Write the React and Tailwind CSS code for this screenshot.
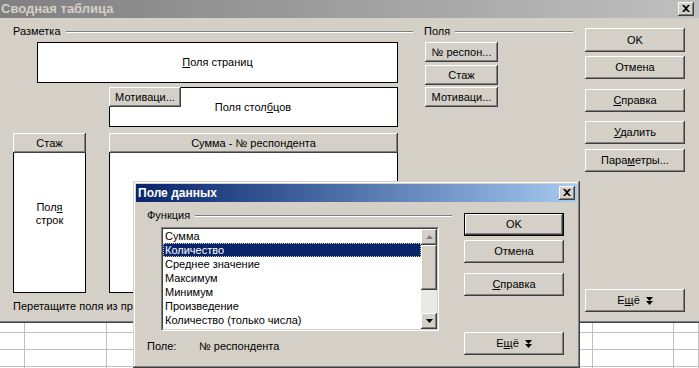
const raised =
  "bg-[#d4d0c8] shadow-[inset_-1px_-1px_0_#404040,inset_1px_1px_0_#ffffff,inset_-2px_-2px_0_#808080,inset_2px_2px_0_#d4d0c8]";

function Btn({ children, className = "", def = false }) {
  if (def) {
    return (
      <div className={`border border-black ${className}`}>
        <div className={`flex h-full w-full items-center justify-center ${raised}`}>{children}</div>
      </div>
    );
  }
  return <div className={`flex items-center justify-center ${raised} ${className}`}>{children}</div>;
}

function CloseBtn() {
  return (
    <div className={`flex h-[14px] w-[16px] items-center justify-center ${raised}`}>
      <svg width="8" height="7" viewBox="0 0 8 7" className="mb-[1px]">
        <path d="M0 0h2l2 2 2-2h2L5 3.5 8 7H6L4 5 2 7H0l3-3.5z" fill="#000" />
      </svg>
    </div>
  );
}

function MoreIcon() {
  return (
    <svg width="7" height="8" viewBox="0 0 7 8" className="ml-[6px]">
      <path d="M0 0h7L3.5 4z M0 4h7L3.5 8z" fill="#000" />
    </svg>
  );
}

function Etched({ className = "" }) {
  return <div className={`h-[2px] border-t border-b border-t-[#808080] border-b-white ${className}`} />;
}

const items = [
  "Сумма",
  "Количество",
  "Среднее значение",
  "Максимум",
  "Минимум",
  "Произведение",
  "Количество (только числа)",
  "Стандартное отклонение (выборка)",
];

function Sheet() {
  const cols = [25, 82, 81, 81, 80, 81, 81, 82, 81, 25];
  const rows = [10, 17, 17, 4];
  return (
    <div className="flex flex-col">
      {rows.map((h, r) => (
        <div key={r} className="flex" style={{ height: h }}>
          {cols.map((w, c) => (
            <div key={c} className="shrink-0 border-r border-b border-[#c0c0c0]" style={{ width: w }} />
          ))}
        </div>
      ))}
    </div>
  );
}

function DataFieldDialog() {
  return (
    <div className="absolute left-[133px] top-[181px] h-[187px] w-[447px] bg-[#d4d0c8] p-[3px] shadow-[inset_-1px_-1px_0_#404040,inset_1px_1px_0_#d4d0c8,inset_-2px_-2px_0_#808080,inset_2px_2px_0_#ffffff]">
      <div className="flex h-[18px] items-center justify-between bg-gradient-to-r from-[#0a246a] to-[#a6caf0] pl-[2px] pr-[2px]">
        <span className="text-[12px] font-bold text-white">Поле данных</span>
        <CloseBtn />
      </div>
      <div className="flex">
        <div className="w-[316px]">
          <div className="mt-[7px] flex h-[13px] items-center pl-[11px]">
            <span className="leading-[13px]">Функция</span>
            <Etched className="ml-[5px] flex-1" />
          </div>
          <div className="ml-[25px] mt-[5px] flex h-[104px] w-[278px] border border-t-[#808080] border-l-[#808080] border-r-white border-b-white">
            <div className="flex flex-1 border border-t-[#404040] border-l-[#404040] border-r-[#d4d0c8] border-b-[#d4d0c8] bg-white">
              <div className="flex-1 overflow-hidden">
                {items.map((t, i) => (
                  <div
                    key={t}
                    className={
                      i === 1
                        ? "h-[14px] whitespace-nowrap border border-dotted border-[#d8d0a0] bg-[#0a246a] pl-[1px] leading-[12px] text-white"
                        : "h-[14px] whitespace-nowrap pl-[2px] leading-[14px]"
                    }
                  >
                    {t}
                  </div>
                ))}
              </div>
              <div className="flex w-[16px] flex-col bg-[#ebe9e4]">
                <Btn className="h-[16px]">
                  <svg width="7" height="4" viewBox="0 0 7 4">
                    <path d="M3.5 0L7 4H0z" fill="#808080" />
                  </svg>
                </Btn>
                <div className={`h-[45px] ${raised}`} />
                <div className="flex-1" />
                <Btn className="h-[16px]">
                  <svg width="7" height="4" viewBox="0 0 7 4">
                    <path d="M0 0h7L3.5 4z" fill="#000" />
                  </svg>
                </Btn>
              </div>
            </div>
          </div>
          <div className="mt-[9px] flex h-[13px] items-center pl-[11px] leading-[13px]">
            <span className="w-[52px]">Поле:</span>
            <span>№ респондента</span>
          </div>
        </div>
        <div className="ml-[12px] flex w-[100px] flex-col">
          <Btn def className="mt-[11px] h-[23px]">OK</Btn>
          <Btn className="mt-[4px] h-[23px]">Отмена</Btn>
          <Btn className="mt-[10px] h-[23px]">
            <span><u>С</u>правка</span>
          </Btn>
          <Btn className="mt-[36px] h-[23px]">
            <span>Е<u>щ</u>ё</span>
            <MoreIcon />
          </Btn>
        </div>
      </div>
    </div>
  );
}

export default function App() {
  return (
    <div className="relative h-[368px] w-[699px] overflow-hidden bg-white font-['Liberation_Sans',Arial,sans-serif] text-[11px] text-black">
      <div className="flex h-[323px] flex-col bg-[#d4d0c8] shadow-[inset_0_-1px_0_#404040,inset_0_-2px_0_#808080]">
        <div className="flex h-[18px] items-center justify-between bg-gradient-to-r from-[#808080] to-[#c0c0c0] pl-[1px] pr-[5px]">
          <span className="text-[13px] font-bold text-[#d4d0c8]">Сводная таблица</span>
          <CloseBtn />
        </div>
        <div className="flex">
          <div className="w-[413px] pt-[7px]">
            <div className="flex h-[13px] items-center pl-[13px]">
              <span className="leading-[13px]">Разметка</span>
              <Etched className="ml-[5px] flex-1" />
            </div>
            <div className="ml-[37px] mt-[4px] flex h-[41px] w-[361px] items-center justify-center border border-black bg-white">
              <span><u>П</u>оля страниц</span>
            </div>
            <div className="ml-[109px] mt-[4px] flex h-[40px] w-[289px] border border-black bg-white">
              <Btn className="h-[20px] w-[72px] shrink-0 -ml-px -mt-px">Мотиваци...</Btn>
              <div className="flex flex-1 items-center justify-center pr-[72px] pt-[1px]">
                <span>Поля стол<u>б</u>цов</span>
              </div>
            </div>
            <div className="mt-[6px] flex">
              <div className="ml-[13px] flex h-[160px] w-[73px] flex-col">
                <Btn className="h-[20px]">Стаж</Btn>
                <div className="flex flex-1 flex-col items-center justify-center border border-t-0 border-black bg-white pb-[18px] leading-[13px]">
                  <span>Пол<u>я</u></span>
                  <span>строк</span>
                </div>
              </div>
              <div className="ml-[23px] flex h-[160px] w-[289px] flex-col">
                <Btn className="h-[20px]">Сумма - № респондента</Btn>
                <div className="flex-1 border border-t-0 border-black bg-white" />
              </div>
            </div>
            <div className="mt-[7px] h-[13px] whitespace-nowrap pl-[13px] leading-[13px]">
              Перетащите поля из правого списка в область разметки
            </div>
          </div>
          <div className="ml-[11px] w-[149px] pt-[7px]">
            <div className="flex h-[13px] items-center">
              <span className="leading-[13px]">Поля</span>
              <Etched className="ml-[5px] flex-1" />
            </div>
            <div className="ml-px mt-[4px] flex w-[73px] flex-col">
              <Btn className="h-[20px]">№ респон...</Btn>
              <Btn className="mt-[3px] h-[20px]">Стаж</Btn>
              <Btn className="mt-[2px] h-[20px]">Мотиваци...</Btn>
            </div>
          </div>
          <div className="ml-[12px] flex w-[100px] flex-col pt-[10px]">
            <Btn className="h-[24px]">OK</Btn>
            <Btn className="mt-[4px] h-[23px]">Отмена</Btn>
            <Btn className="mt-[10px] h-[23px]">
              <span><u>С</u>правка</span>
            </Btn>
            <Btn className="mt-[9px] h-[23px]">
              <span><u>У</u>далить</span>
            </Btn>
            <Btn className="mt-[5px] h-[23px]">
              <span>Пара<u>м</u>етры...</span>
            </Btn>
            <Btn className="mt-[117px] h-[23px]">
              <span>Е<u>щ</u>ё</span>
              <MoreIcon />
            </Btn>
          </div>
        </div>
      </div>
      <Sheet />
      <DataFieldDialog />
    </div>
  );
}
